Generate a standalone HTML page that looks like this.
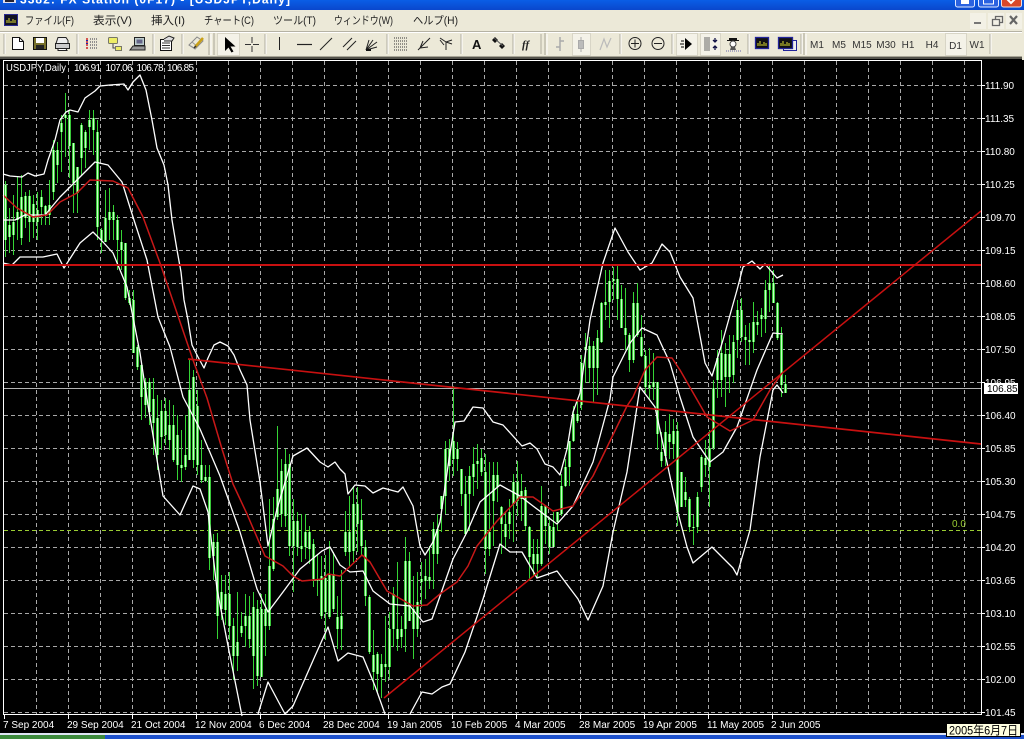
<!DOCTYPE html>
<html><head><meta charset="utf-8"><style>
html,body{margin:0;padding:0;background:#000;width:1024px;height:739px;overflow:hidden}
svg{display:block}
text{font-family:"Liberation Sans","Noto Sans CJK JP",sans-serif}
.m{font-size:11px;fill:#222}
.a{font-size:10px;fill:#fff}
.t{font-size:10px;fill:#fff}
.f{font-size:10px;fill:#333;text-anchor:middle}
</style></head><body>
<svg width="1024" height="739" viewBox="0 0 1024 739" xmlns="http://www.w3.org/2000/svg" shape-rendering="auto">
<defs><linearGradient id="tb" x1="0" y1="0" x2="0" y2="1"><stop offset="0" stop-color="#0a5ee6"/><stop offset="1" stop-color="#0a47cc"/></linearGradient>
<path id="bd" fill="none" d="M5.500 185V240M9.500 225V237M13.500 222V235M17.500 212V220M21.500 197V238M25.500 196V218M29.500 196V222M33.500 204V222M37.500 210V222M41.500 197V207M45.500 206V214M49.500 205V215M53.500 150V192M57.500 150V165M61.500 123V132M65.500 115V118M69.500 115V146M73.500 143V183M77.500 167V193M81.500 125V158M85.500 132V148M89.500 120V127M93.500 118V130M97.500 132V227M101.500 230V240M105.500 218V242M109.500 212V220M113.500 212V220M117.500 220V240M121.500 242V250M125.500 243V298M129.500 298V303M133.500 300V353M137.500 347V367M141.500 365V397M145.500 382V405M149.500 382V412M153.500 399V423M157.500 418V455M161.500 411V437M165.500 411V435M169.500 425V440M173.500 425V460M177.500 435V465M181.500 465V468M185.500 455V467M189.500 390V460M193.500 377V460M197.500 406V465M201.500 465V480M205.500 477V481M209.500 477V558M213.500 542V556M217.500 542V616M221.500 592V609M225.500 594V610M229.500 594V626M233.500 626V656M237.500 642V656M241.500 626V633M245.500 616V626M249.500 616V639M253.500 607V656M257.500 609V676M261.500 609V677M265.500 609V626M269.500 566V626M273.500 519V569M277.500 489V517M281.500 471V514M285.500 464V516M289.500 464V546M293.500 521V546M297.500 521V547M301.500 546V549M305.500 532V547M309.500 532V549M313.500 544V579M317.500 579V581M321.500 576V616M325.500 578V612M329.500 574V617M333.500 574V609M337.500 617V629M341.500 616V629M345.500 532V552M349.500 532V552M353.500 504V551M357.500 504V524M361.500 520V546M365.500 547V596M369.500 597V652M373.500 655V672M377.500 654V674M381.500 664V677M385.500 664V667M389.500 629V667M393.500 594V629M397.500 629V639M401.500 629V637M405.500 561V629M409.500 561V621M413.500 609V629M417.500 602V629M421.500 579V582M425.500 576V581M429.500 577V581M433.500 529V554M437.500 529V554M441.500 496V509M445.500 449V496M449.500 449V466M453.500 441V459M457.500 449V459M461.500 469V494M465.500 494V534M469.500 476V494M473.500 464V477M477.500 461V464M481.500 458V472M485.500 472V549M489.500 532V549M493.500 475V501M497.500 475V487M501.500 507V524M505.500 524V537M509.500 512V524M513.500 482V504M517.500 482V501M521.500 491V499M525.500 490V526M529.500 527V557M533.500 554V564M537.500 554V564M541.500 506V564M545.500 506V526M549.500 526V547M553.500 527V547M557.500 512V522M561.500 486V514M565.500 467V486M569.500 441V467M573.500 414V441M577.500 414V421M581.500 363V405M585.500 347V350M589.500 346V368M593.500 346V368M597.500 338V368M601.500 303V342M605.500 302V305M609.500 281V302M613.500 279V281M617.500 279V299M621.500 299V328M625.500 328V335M629.500 335V360M633.500 303V360M637.500 303V335M641.500 337V356M645.500 356V387M649.500 385V388M653.500 382V387M657.500 382V434M661.500 452V461M665.500 432V456M669.500 434V442M673.500 431V444M677.500 431V512M681.500 472V507M685.500 492V500M689.500 499V527M693.500 527V528M697.500 497V527M701.500 457V487M705.500 458V465M709.500 448V467M713.500 388V448M717.500 358V380M721.500 353V380M725.500 354V377M729.500 354V377M733.500 342V375M737.500 310V340M741.500 310V337M745.500 337V340M749.500 340V342M753.500 322V342M757.500 322V325M761.500 315V319M765.500 290V319M769.500 283V290M773.500 283V303M777.500 303V338M781.500 335V385M785.500 384V393"/></defs>
<rect width="1024" height="739" fill="#000"/>
<!-- title -->
<rect width="1024" height="10" fill="url(#tb)"/>
<rect x="3" y="0" width="13" height="3" fill="#dde"/><rect x="5" y="0" width="9" height="2" fill="#223"/>
<text x="20" y="3.500" font-size="12" font-weight="bold" fill="#fff" textLength="270" lengthAdjust="spacing">3382: FX Station (0F17) - [USDJPY,Daily]</text>
<rect x="955.500" y="-3" width="19" height="10" rx="2" fill="#2a62e0" stroke="#dfe8ff"/><rect x="961" y="0" width="8" height="4" fill="#fff"/>
<rect x="978.500" y="-3" width="20" height="10" rx="2" fill="#2a62e0" stroke="#dfe8ff"/><rect x="983.500" y="-1" width="10" height="5" fill="none" stroke="#fff"/>
<rect x="1001.500" y="-3" width="20" height="10" rx="2" fill="#d8482a" stroke="#f4e0da"/><path d="M1007-1l4 4 4-4" stroke="#fff" stroke-width="2" fill="none"/>
<!-- menu + toolbar bg -->
<rect y="10" width="1024" height="47" fill="#ece9d8"/>
<rect y="32" width="1024" height="1" fill="#fff"/><rect y="31" width="1024" height="1" fill="#b5b2a4"/>
<rect y="56" width="1024" height="1" fill="#a9a697"/><rect y="57" width="1024" height="2" fill="#55544c"/>
<rect x="1022" y="10" width="2" height="50" fill="#ece9d8"/>
<rect x="4.500" y="14.500" width="13" height="11" fill="#112" stroke="#2a2a90"/><path d="M7 23v-3M9 23v-5M11 23v-2M13 23v-4M15 23v-3" stroke="#dd3" stroke-width="1"/>
<text class="m" x="25" y="24" textLength="49" lengthAdjust="spacingAndGlyphs">ファイル(F)</text>
<text class="m" x="93" y="24" textLength="39" lengthAdjust="spacingAndGlyphs">表示(V)</text>
<text class="m" x="151" y="24" textLength="34" lengthAdjust="spacingAndGlyphs">挿入(I)</text>
<text class="m" x="204" y="24" textLength="50" lengthAdjust="spacingAndGlyphs">チャート(C)</text>
<text class="m" x="273" y="24" textLength="43" lengthAdjust="spacingAndGlyphs">ツール(T)</text>
<text class="m" x="334" y="24" textLength="59" lengthAdjust="spacingAndGlyphs">ウィンドウ(W)</text>
<text class="m" x="413" y="24" textLength="45" lengthAdjust="spacingAndGlyphs">ヘルプ(H)</text>
<rect x="970" y="13" width="16" height="16" fill="#f3f1e6"/><rect x="988" y="13" width="16" height="16" fill="#f3f1e6"/><rect x="1006" y="13" width="16" height="16" fill="#f3f1e6"/>
<path d="M974 23h7" stroke="#777" stroke-width="2"/><path d="M992.500 19.500h7v6h-7zM995.500 19v-2.500h7v6h-2.500" stroke="#666" stroke-width="1.300" fill="none"/><path d="M1010 16l7 8M1017 16l-7 8" stroke="#666" stroke-width="2.200"/>
<!-- separators -->
<path d="M4 34v20M77 34v20M153 34v20M182 34v20M265 34v20M387 34v20M461 34v20M513 34v20M541 34v20M620 34v20M672 34v20M748 34v20M801 34v20M990 34v20" stroke="#b0ad9e"/>
<path d="M5 34v20M78 34v20M154 34v20M183 34v20M266 34v20M388 34v20M462 34v20M514 34v20M621 34v20M673 34v20M749 34v20M802 34v20M991 34v20M211 34v21M547 34v21M806 34v21" stroke="#fff"/>
<path d="M209 33v22M214 33v22M545 33v22M804 33v22" stroke="#a8a596"/>
<!-- pressed buttons -->
<g fill="#f4f2e8" stroke="#d8d5c6"><rect x="217.500" y="33.500" width="22" height="22"/><rect x="572.500" y="33.500" width="18" height="22"/><rect x="676.500" y="33.500" width="21" height="22"/><rect x="700.500" y="33.500" width="20" height="22"/><rect x="945.500" y="33.500" width="21" height="22"/></g>
<!-- new, save, print -->
<path d="M12.500 37.500h7l4 4v8h-11z" fill="#fff" stroke="#111"/><path d="M19.500 37.500v4h4" fill="none" stroke="#111"/>
<rect x="33.500" y="37.500" width="13" height="12" fill="#77702a" stroke="#111"/><rect x="36" y="38" width="8" height="5" fill="#fff"/><rect x="36" y="45" width="8" height="4" fill="#222"/>
<path d="M58 37.500h8l2 3v3h-12z" fill="#eee" stroke="#222"/><rect x="55.500" y="43.500" width="14" height="5" fill="#ccc" stroke="#222"/><path d="M58 48.500h8l1 2h-9z" fill="#fff" stroke="#222"/>
<!-- list, folders, pc, props, pencil -->
<path d="M86 39h2M86 42h2M86 45h2M86 48h2" stroke="#c22" stroke-width="1.500"/><path d="M90 39h8M90 42h8M90 45h8M90 48h8" stroke="#334" stroke-dasharray="1 1"/><path d="M86 40.500h2M86 43.500h2" stroke="#22a"/>
<rect x="108.500" y="37.500" width="9" height="6" rx="1" fill="#ee6" stroke="#776"/><path d="M113 44v4h3" stroke="#444" fill="none"/><rect x="115.500" y="46.500" width="6" height="4" fill="#ee6" stroke="#776"/>
<rect x="134.500" y="37.500" width="10" height="8" fill="#bcc" stroke="#222"/><rect x="136.500" y="39.500" width="6" height="4" fill="#668"/><path d="M130 50l3-4h12v4z" fill="#999" stroke="#222"/>
<rect x="160.500" y="39.500" width="11" height="11" fill="#fff" stroke="#111"/><path d="M162 43h8M162 45.500h8M162 48h8" stroke="#333"/><path d="M164 39l5-3 5 2-2 3h-8" fill="#ddd" stroke="#222"/>
<path d="M189 45l8-8 6 4-8 8z" fill="none" stroke="#888"/><path d="M192 42l6 5M191 46l5 3" stroke="#999"/><path d="M195 47l8-9" stroke="#c9a018" stroke-width="2.500"/><path d="M194 48l2-2" stroke="#333" stroke-width="1.500"/>
<!-- cursor, cross -->
<path d="M225 37v14l3.500-3.500 3 5 2-1-3-5h5z" fill="#000"/>
<path d="M252 37v6M252 46v6M245 44.500h6M253 44.500h6" stroke="#333"/>
<!-- drawing -->
<path d="M279.500 37v13" stroke="#222"/><path d="M297 44.500h15" stroke="#222" stroke-width="1.200"/><path d="M320 50l12-12" stroke="#222"/>
<path d="M343 47l9-9M347 50l9-9" stroke="#222"/>
<path d="M366 50l3-10M366 50l7-10M366 50l11-8M366 50l11-3" stroke="#222"/><path d="M366 50h5" stroke="#111" stroke-width="2"/>
<path d="M394 38h13M394 41h13M394 44h13M394 47h13M394 50h13" stroke="#333" stroke-dasharray="1 1"/>
<path d="M418 50l12-12M420 48l3-7M420 48l8-1" stroke="#222" fill="none"/>
<path d="M440 38l6 4 6-2M446 42v8M446 42l6 2M440 40l4 5" stroke="#222" fill="none"/>
<text x="472" y="49" font-size="13" font-weight="bold" fill="#111">A</text>
<path d="M495 37l3 3-3 3-3-3zM502 43l3 3-3 3-3-3z" fill="#111"/><path d="M494 38l9 8" stroke="#555"/>
<text x="522" y="48" font-size="11" font-weight="bold" font-style="italic" fill="#222" style="font-family:'Liberation Serif',serif">ff</text>
<!-- chart types -->
<path d="M560 37v14M556 47h4M560 41h4" stroke="#aaa" stroke-width="1.500"/>
<path d="M581 37v15" stroke="#aaa"/><rect x="578.500" y="40.500" width="5" height="8" fill="#bbb" stroke="#aaa"/>
<path d="M600 50l4-11 3 8 4-9" stroke="#bbb" fill="none" stroke-width="1.200"/>
<circle cx="635" cy="43.500" r="6" fill="none" stroke="#222"/><path d="M631 43.500h8M635 39.500v8" stroke="#222"/>
<circle cx="658" cy="43.500" r="6" fill="none" stroke="#222"/><path d="M654 43.500h8" stroke="#222"/>
<path d="M685 38l7 6-7 6z" fill="#000"/><path d="M684 41h-3M684 44h-4M684 47h-3" stroke="#000"/>
<path d="M705 37v14M707 37v14M709 37v14" stroke="#666"/><path d="M715 38v4M713 40l2 2 2-2M715 50v-4M713 48l2-2 2 2" stroke="#114" stroke-width="1.300" fill="none"/>
<path d="M729 38h8v2h2v1h-12v-1h2z" fill="#111"/><circle cx="733" cy="44" r="3" fill="#fff" stroke="#444"/><path d="M731 47h4l1 3h-6z" fill="#555"/><path d="M726 51h15" stroke="#66a" stroke-dasharray="1 1"/>
<rect x="755.500" y="37.500" width="13" height="11" fill="#111" stroke="#22249a" stroke-width="1.300"/><path d="M758 46v-3M760 46v-5M762 46v-2M764 46v-4M766 46v-3" stroke="#dd3"/>
<rect x="783.500" y="40.500" width="13" height="10" fill="#eee" stroke="#22249a"/><rect x="778.500" y="37.500" width="14" height="11" fill="#111" stroke="#22249a" stroke-width="1.300"/><path d="M781 46v-3M783 46v-5M785 46v-2M787 46v-4M789 46v-3" stroke="#dd3"/>
<!-- timeframes -->
<text class="f" x="817" y="48">M1</text><text class="f" x="839" y="48">M5</text><text class="f" x="862" y="48">M15</text><text class="f" x="886" y="48">M30</text><text class="f" x="908" y="48">H1</text><text class="f" x="932" y="48">H4</text><text class="f" x="955.500" y="49">D1</text><text class="f" x="977" y="48">W1</text>
<!-- chart grid -->
<path stroke="#a8a8a8" stroke-dasharray="4 3" fill="none" d="M36.500 61V714M68.500 61V714M100.500 61V714M132.500 61V714M164.500 61V714M196.500 61V714M228.500 61V714M260.500 61V714M292.500 61V714M324.500 61V714M356.500 61V714M388.500 61V714M420.500 61V714M452.500 61V714M484.500 61V714M516.500 61V714M548.500 61V714M580.500 61V714M612.500 61V714M644.500 61V714M676.500 61V714M708.500 61V714M740.500 61V714M772.500 61V714M804.500 61V714M836.500 61V714M868.500 61V714M900.500 61V714M932.500 61V714M964.500 61V714
M4 85.500H981M4 118.500H981M4 151.500H981M4 184.500H981M4 217.500H981M4 250.500H981M4 283.500H981M4 316.500H981M4 349.500H981M4 382.500H981M4 415.500H981M4 448.500H981M4 481.500H981M4 514.500H981M4 547.500H981M4 580.500H981M4 613.500H981M4 646.500H981M4 679.500H981M4 712.500H981"/>
<path d="M4 530.500H981" stroke="#9acd32" stroke-dasharray="4 3"/>
<path d="M4 388.500H981" stroke="#b4b4b4"/>
<!-- wicks -->
<path fill="none" stroke="#35d435" stroke-width="1" d="M5.500 181V257M9.500 208V253M13.500 195V255M17.500 176V240M21.500 175V245M25.500 192V228M29.500 190V242M33.500 195V238M37.500 192V240M41.500 190V225M45.500 205V225M49.500 180V225M53.500 140V200M57.500 142V183M61.500 115V172M65.500 93V157M69.500 110V178M73.500 143V213M77.500 167V213M81.500 123V175M85.500 130V168M89.500 110V150M93.500 110V155M97.500 120V240M101.500 228V253M105.500 190V242M109.500 188V240M113.500 205V240M117.500 215V270M121.500 230V270M125.500 243V300M129.500 290V305M133.500 290V353M137.500 345V370M141.500 362V420M145.500 378V418M149.500 378V425M153.500 378V455M157.500 395V470M161.500 400V450M165.500 398V445M169.500 400V450M173.500 405V462M177.500 415V480M181.500 430V482M185.500 415V470M189.500 360V455M193.500 370V468M197.500 390V475M201.500 440V483M205.500 465V482M209.500 465V570M213.500 534V580M217.500 533V639M221.500 575V620M225.500 575V625M229.500 572V640M233.500 618V680M237.500 592V671M241.500 612V637M245.500 594V647M249.500 596V648M253.500 592V689M257.500 600V686M261.500 594V677M265.500 594V656M269.500 499V630M273.500 497V571M277.500 426V520M281.500 459V527M285.500 449V527M289.500 454V556M293.500 499V592M297.500 512V556M301.500 514V562M305.500 514V559M309.500 526V564M313.500 539V587M317.500 554V596M321.500 556V619M325.500 555V640M329.500 541V619M333.500 552V612M337.500 596V649M341.500 570V650M345.500 511V556M349.500 496V567M353.500 486V562M357.500 487V552M361.500 499V556M365.500 540V606M369.500 595V654M373.500 630V690M377.500 652V692M381.500 654V698M385.500 616V682M389.500 612V679M393.500 587V647M397.500 562V651M401.500 616V648M405.500 537V652M409.500 552V621M413.500 576V659M417.500 572V637M421.500 562V607M425.500 559V599M429.500 546V589M433.500 522V589M437.500 514V564M441.500 496V532M445.500 441V514M449.500 439V481M453.500 386V476M457.500 442V471M461.500 469V506M465.500 476V536M469.500 466V531M473.500 447V496M477.500 444V489M481.500 449V476M485.500 454V574M489.500 462V556M493.500 462V546M497.500 462V502M501.500 506V554M505.500 512V549M509.500 499V539M513.500 474V542M517.500 461V516M521.500 474V521M525.500 487V531M529.500 526V581M533.500 539V576M537.500 539V577M541.500 486V566M545.500 506V544M549.500 517V554M553.500 512V536M557.500 512V531M561.500 474V516M565.500 459V487M569.500 441V486M573.500 406V442M577.500 399V423M581.500 355V410M585.500 333V383M589.500 337V383M593.500 341V402M597.500 330V395M601.500 302V343M605.500 270V320M609.500 270V328M613.500 267V300M617.500 265V320M621.500 285V328M625.500 288V350M629.500 333V372M633.500 292V363M637.500 283V337M641.500 315V357M645.500 350V393M649.500 348V400M653.500 353V400M657.500 382V450M661.500 432V467M665.500 421V466M669.500 414V459M673.500 419V459M677.500 422V526M681.500 472V507M685.500 477V507M689.500 497V532M693.500 515V545M697.500 492V533M701.500 455V492M705.500 440V477M709.500 430V507M713.500 380V450M717.500 350V398M721.500 330V397M725.500 343V407M729.500 335V393M733.500 335V383M737.500 300V358M741.500 298V342M745.500 325V365M749.500 323V365M753.500 302V353M757.500 311V335M761.500 308V337M765.500 280V333M769.500 265V312M773.500 270V303M777.500 302V340M781.500 327V397M785.500 375V393"/>
<!-- bodies -->
<use href="#bd" stroke="#39c839" stroke-width="3"/>
<use href="#bd" stroke="#c8ffc8" stroke-width="1"/>
<g fill="none" stroke-linejoin="round">
<!-- bands -->
<path stroke="#fff" stroke-width="1.300" d="M3 174L10 176L22 177L28 173L35 176L44 174L48 160L55 140L60 120L66 112L70 110L78 112L85 98L95 91L100 86L110 85L124 84L128 90L133 82L140 75L146 90L152 120L157 148L164 165L168 185L172 220L177 250L181 272L184 300L188 320L192 345L198 357L204 368L208 358L214 345L220 342L228 346L234 355L240 370L247 385L250 420L260 482L268 546L277 509L293 456L307 448L320 462L328 467L335 462L340 469L345 474L348 494L355 485L365 486L373 493L383 488L398 492L403 487L413 506L420 546L425 555L433 542L440 522L448 466L455 422L464 421L473 407L483 408L493 422L503 425L522 446L530 443L537 449L545 464L553 467L560 475L567 449L573 412L580 393L590 320L603 263L615 228L628 252L640 270L652 263L662 244L670 252L680 277L693 298L705 363L712 376L723 340L737 290L743 267L752 261L760 269L765 264L777 278L783 275"/>
<path stroke="#fff" stroke-width="1.300" d="M3 220L15 220L25 215L45 215L60 197L72 185L95 162L108 165L122 182L133 217L147 260L158 317L170 347L183 397L200 429L220 476L240 532L257 589L268 612L283 592L300 569L322 551L330 547L340 565L350 572L363 571L373 591L390 604L410 606L423 622L432 619L453 559L467 532L480 502L500 485L520 496L533 506L557 524L573 506L593 462L610 399L613 377L630 343L642 328L657 335L670 363L680 397L693 437L710 462L723 452L737 427L757 370L773 333L783 334"/>
<path stroke="#fff" stroke-width="1.300" d="M3 263L12 265L20 257L43 257L57 254L64 268L80 243L93 232L103 242L113 253L127 287L140 353L147 399L163 496L180 515L193 486L200 489L208 512L217 589L230 656L242 716M258 714L268 682L277 699L285 714L293 706L315 656L328 627L338 661L348 653L363 657L375 686L385 714M410 714L422 692L432 694L442 687L450 684L465 652L483 599L500 544L510 552L522 552L537 578L557 571L578 599L588 620L603 586L613 532L627 472L640 387L655 407L677 509L687 547L693 563L712 547L733 568L737 575L750 530L760 457L773 390L777 385L783 393"/>
<!-- MA -->
<path stroke="#c81818" stroke-width="1.500" d="M3 195L17 208L33 217L47 215L60 202L77 193L90 180L113 181L128 188L143 217L160 263L177 313L193 360L207 398L222 449L233 484L247 514L265 556L283 566L293 576L302 581L323 579L328 574L340 576L362 555L370 562L387 591L413 606L427 605L440 594L457 582L468 566L477 546L497 521L520 497L533 497L553 511L573 506L593 476L627 406L633 397L645 370L657 357L672 358L680 370L707 417L730 431L753 420L770 390L782 373"/>
<!-- trend lines -->
<path stroke="#c81010" stroke-width="2" d="M3 265H981"/>
<path stroke="#c81010" stroke-width="1.700" d="M188 359L981 444"/>
<path stroke="#c81010" stroke-width="1.500" d="M384 698L981 211"/>
</g>
<!-- frame -->
<path d="M3.500 60.500H981.500V714.500H3.500Z" fill="none" stroke="#fff"/>
<text class="t" x="6" y="71" textLength="60" lengthAdjust="spacingAndGlyphs">USDJPY,Daily</text>
<text class="t" x="74" y="71" textLength="27">106.91</text><text class="t" x="105.500" y="71" textLength="27">107.06</text><text class="t" x="136.500" y="71" textLength="27">106.78</text><text class="t" x="167" y="71" textLength="27">106.85</text>
<!-- axis -->
<path stroke="#fff" d="M981 85.500h4M981 118.500h4M981 151.500h4M981 184.500h4M981 217.500h4M981 250.500h4M981 283.500h4M981 316.500h4M981 349.500h4M981 382.500h4M981 415.500h4M981 448.500h4M981 481.500h4M981 514.500h4M981 547.500h4M981 580.500h4M981 613.500h4M981 646.500h4M981 679.500h4M981 712.500h4"/>
<g>
<text class="a" x="985" y="89">111.90</text><text class="a" x="985" y="122">111.35</text><text class="a" x="985" y="155">110.80</text><text class="a" x="985" y="188">110.25</text><text class="a" x="985" y="221">109.70</text><text class="a" x="985" y="254">109.15</text><text class="a" x="985" y="287">108.60</text><text class="a" x="985" y="320">108.05</text><text class="a" x="985" y="353">107.50</text><text class="a" x="985" y="386">106.95</text><text class="a" x="985" y="419">106.40</text><text class="a" x="985" y="452">105.85</text><text class="a" x="985" y="485">105.30</text><text class="a" x="985" y="518">104.75</text><text class="a" x="985" y="551">104.20</text><text class="a" x="985" y="584">103.65</text><text class="a" x="985" y="617">103.10</text><text class="a" x="985" y="650">102.55</text><text class="a" x="985" y="683">102.00</text><text class="a" x="985" y="716">101.45</text>
</g>
<rect x="984" y="383" width="34" height="11" fill="#fff"/><text x="987" y="392" font-size="10" fill="#000">106.85</text>
<text x="952" y="527" font-size="10" fill="#9acd32">0.0</text>
<!-- time -->
<path stroke="#fff" d="M4.500 715v4M68.500 715v4M132.500 715v4M196.500 715v4M260.500 715v4M324.500 715v4M388.500 715v4M452.500 715v4M516.500 715v4M580.500 715v4M644.500 715v4M708.500 715v4M772.500 715v4"/>
<g>
<text class="t" x="3" y="728">7 Sep 2004</text><text class="t" x="67" y="728">29 Sep 2004</text><text class="t" x="131" y="728">21 Oct 2004</text><text class="t" x="195" y="728">12 Nov 2004</text><text class="t" x="259" y="728">6 Dec 2004</text><text class="t" x="323" y="728">28 Dec 2004</text><text class="t" x="387" y="728">19 Jan 2005</text><text class="t" x="451" y="728">10 Feb 2005</text><text class="t" x="515" y="728">4 Mar 2005</text><text class="t" x="579" y="728">28 Mar 2005</text><text class="t" x="643" y="728">19 Apr 2005</text><text class="t" x="707" y="728">11 May 2005</text><text class="t" x="771" y="728">2 Jun 2005</text>
</g>
<!-- taskbar -->
<rect y="733" width="1024" height="2" fill="#dfe6f5"/><rect y="735" width="1024" height="4" fill="#1c50cc"/><rect y="735" width="105" height="4" fill="#3c8a3c"/>
<rect x="946.500" y="723.500" width="74" height="13" fill="#ffffe1" stroke="#000"/>
<text x="949" y="734.500" font-size="12" fill="#000" textLength="69" lengthAdjust="spacingAndGlyphs">2005年6月7日</text>
</svg>
</body></html>
